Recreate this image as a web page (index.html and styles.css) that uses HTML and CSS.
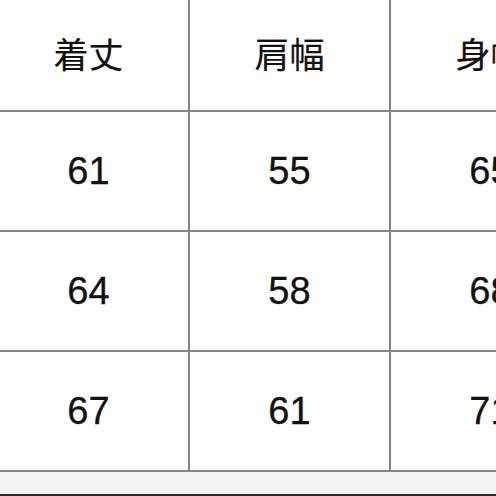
FILE: index.html
```html
<!DOCTYPE html>
<html lang="ja">
<head>
<meta charset="utf-8">
<link rel="stylesheet" href="styles.css">
</head>
<body>
<div class="page">
  <div class="grid">
    <div class="cell head">着丈</div>
    <div class="cell head">肩幅</div>
    <div class="cell head">身幅</div>
    <div class="cell">61</div>
    <div class="cell">55</div>
    <div class="cell">65</div>
    <div class="cell">64</div>
    <div class="cell">58</div>
    <div class="cell">68</div>
    <div class="cell">67</div>
    <div class="cell">61</div>
    <div class="cell">71</div>
  </div>
  <div class="footer"></div>
  <div class="bar"></div>
</div>
</body>
</html>
```

FILE: styles.css
```css
html, body {
  margin: 0;
  padding: 0;
  overflow: hidden;
  background: #ffffff;
  width: 496px;
  height: 496px;
}
.page {
  width: 496px;
  height: 496px;
  overflow: hidden;
  display: flex;
  flex-direction: column;
}
.grid {
  display: grid;
  grid-template-columns: 199px 199px 199px;
  grid-template-rows: 118px 118px 118px 118px;
  gap: 2px;
  padding-bottom: 2px;
  background: #858585;
  margin-top: -8px;
  margin-left: -11px;
  width: 601px;
  flex: none;
}
.cell {
  background: #ffffff;
  display: flex;
  align-items: center;
  justify-content: center;
  font-family: "Liberation Sans", Arial, sans-serif;
  font-size: 38px;
  color: #111111;
  -webkit-text-stroke: 0.3px #111111;
}
.head {
  font-family: "Noto Sans CJK JP", "Noto Sans CJK SC", sans-serif;
  font-size: 35px;
  font-weight: 400;
  padding-top: 2px;
  -webkit-text-stroke: 0.2px #111111;
}
.footer {
  flex: 1;
  background: #f2f2f2;
}
.bar {
  height: 2px;
  background: #2e2e2e;
  flex: none;
}
```
